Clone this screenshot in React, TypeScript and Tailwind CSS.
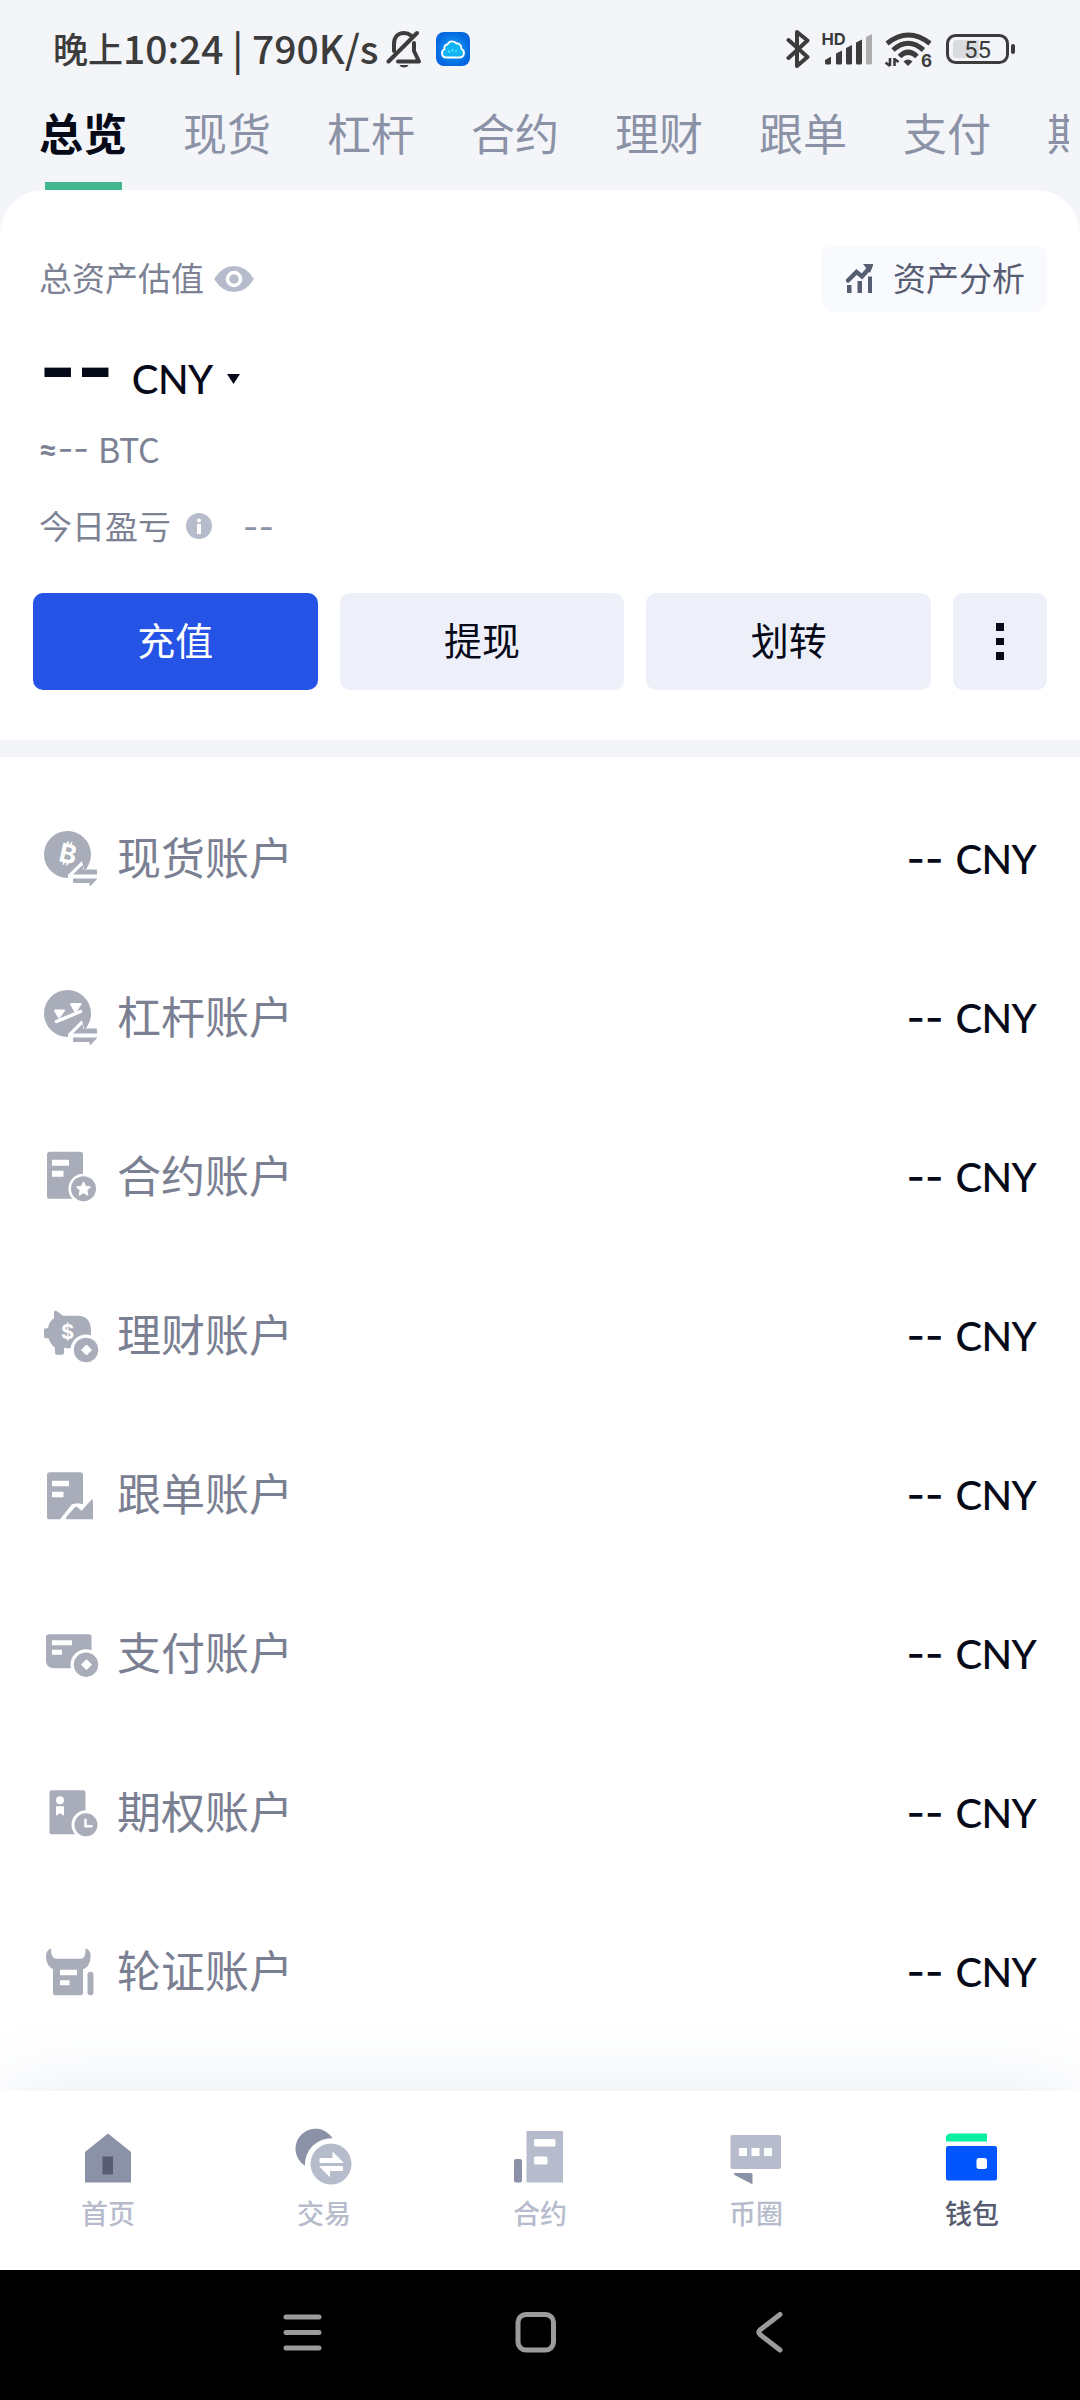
import React from 'react';

interface IconProps {
  className?: string;
}

const tabs = ['总览', '现货', '杠杆', '合约', '理财', '跟单', '支付', '期权'];

/* Status bar icons */
const BellOffIcon: React.FC<IconProps> = ({ className }) => (
  <svg className={className} width="36" height="38" viewBox="0 0 36 38" fill="none" stroke="#3c3c3c" strokeWidth="4" strokeLinecap="round">
    <path d="M8 21V14C8 7 12 3 18 3c3 0 5 .8 7 2.500" />
    <path d="M2.500 31.500L31 3" />
    <path d="M28 13v8l5 10.500H12" strokeLinejoin="round" />
    <path d="M13.500 35h9c-1 1.800-2.500 2.500-4.500 2.500s-3.500-.7-4.500-2.500z" fill="#3c3c3c" stroke="none" />
  </svg>
);

const CloudAppIcon: React.FC<IconProps> = ({ className }) => (
  <svg className={className} width="34" height="34" viewBox="0 0 34 34">
    <defs>
      <radialGradient id="cloudBg">
        <stop offset="0" stopColor="#10a8fa" />
        <stop offset="1" stopColor="#0668e0" />
      </radialGradient>
    </defs>
    <rect width="34" height="34" rx="8" fill="url(#cloudBg)" />
    <path d="M10 25.500h14a4.500 4.500 0 0 0 1.500-8.500c0-4-2.500-6-5-5.500-2-3-7.500-3-9 1-3 .2-3.500 2.500-3 4.500-4 2-3 8.500 1.500 8.500z" fill="#12b4f5" stroke="#fff" strokeWidth="1.800" />
    <path d="M13 18v3M16.500 17v3M20 18v2" stroke="#5ff0ff" strokeWidth="1.200" />
  </svg>
);

const BluetoothIcon: React.FC<IconProps> = ({ className }) => (
  <svg className={className} width="24" height="38" viewBox="0 0 24 38" fill="none" stroke="#3c3c3c" strokeWidth="4" strokeLinecap="round" strokeLinejoin="round">
    <path d="M2.500 10L21.500 27 11 36V2l10.500 8.500L2.500 28" />
  </svg>
);

const SignalIcon: React.FC<IconProps> = ({ className }) => (
  <svg className={className} width="52" height="40" viewBox="0 -3 52 40" fill="#3c3c3c">
    <text x="-.5" y="13" fontSize="16.500" fontWeight="700" fontFamily="Inter, sans-serif">HD</text>
    <path d="M3 28l6-3.500V31q0 1.500-1.500 1.500H4.500Q3 32.500 3 31zM14 21.500l6-3V31q0 1.500-1.500 1.500h-3Q14 32.500 14 31zM24 16l6-3V31q0 1.500-1.500 1.500h-3Q24 32.500 24 31zM34 10.500l6-3V31q0 1.500-1.500 1.500h-3Q34 32.500 34 31z" />
    <path d="M44 5l6-3V31q0 1.500-1.500 1.500h-3Q44 32.500 44 31z" fill="#adadae" />
  </svg>
);

const WifiIcon: React.FC<IconProps> = ({ className }) => (
  <svg className={className} width="50" height="46" viewBox="0 -4 50 46" fill="none" stroke="#3c3c3c" strokeWidth="5">
    <path d="M2 13.500Q23.500 -3.500 45 13.500M8 20Q23 6.500 38.500 20M14.500 26.500Q23 18 32 26.500" />
    <path d="M18.500 31.500q4.500-4 9 0l-4.500 4.500z" fill="#3c3c3c" stroke="none" />
    <path d="M5 28v8M.5 32.500L5 36M9.500 36v-8M9.500 29l4 3" strokeWidth="2.600" />
    <text x="36" y="36.500" fontSize="17" fontWeight="700" fontFamily="Inter, sans-serif" fill="#3c3c3c" stroke="none">6</text>
  </svg>
);

const BatteryIcon: React.FC<IconProps> = ({ className }) => (
  <svg className={className} width="70" height="30" viewBox="0 0 70 30">
    <rect x="1.500" y="1.500" width="60" height="27" rx="8" fill="none" stroke="#3c3c3c" strokeWidth="3" />
    <path d="M11 6h22v18H11q-4 0-4-4V10q0-4 4-4z" fill="#dadbde" />
    <rect x="65" y="10" width="4" height="10" rx="2" fill="#3c3c3c" />
    <text x="31.500" y="23.500" textAnchor="middle" fontSize="24" fontFamily="Roboto, sans-serif" fill="#3c3c3c">55</text>
  </svg>
);

/* Account icons, all on a 56x56 grid */
const Swap = () => (
  <g>
    <path d="M38 30L24 44v12h20z" fill="#fff" />
    <path d="M29 43.500l8.500-8.500q1.500-1 1.500 .5V38.500h13q1 0 1 1v4zM29 47.500h24.500l-6.500 7q-1.500 1-1.500-.5V52H30q-1 0-1-1z" />
  </g>
);

const SpotIcon = () => (
  <>
    <circle cx="23.500" cy="23.500" r="23.500" />
    <text x="24" y="32" fontSize="26" fontWeight="700" textAnchor="middle" fontFamily="Inter, DejaVu Sans, sans-serif" fill="#fff" transform="rotate(12 24 23)">₿</text>
    <Swap />
  </>
);

const MarginIcon = () => (
  <>
    <circle cx="23.500" cy="23.500" r="23.500" />
    <g fill="#fff" stroke="#fff" strokeWidth="2" strokeLinejoin="round">
      <path d="M12.500 31.500l24-10" strokeWidth="3.500" strokeLinecap="round" />
      <path d="M11 20.500h9l-5 7zM27 14h9.500l-5 8z" />
    </g>
    <Swap />
  </>
);

const ContractIcon = () => (
  <g transform="translate(0 1.700)">
    <path d="M6 1h30q3 0 3 3v42q0 2-2 2H5q-2 0-2-2V4q0-3 3-3z" />
    <path d="M8 9h17v6H8zM8 20h11.500v6H8z" fill="#fff" />
    <circle cx="39.500" cy="38" r="15" fill="#fff" />
    <circle cx="39.500" cy="38" r="12.500" />
    <path d="M39.500 31l2.100 4.600 5 .6-3.700 3.400 1 5-4.400-2.500-4.400 2.500 1-5-3.700-3.400 5-.6z" fill="#fff" stroke="#fff" strokeWidth="1" strokeLinejoin="round" />
  </g>
);

const Coin: React.FC<{ cy: number }> = ({ cy }) => (
  <g transform={`translate(42 ${cy})`}>
    <circle r="15.500" fill="#fff" />
    <circle r="12.200" />
    <path d="M.5 -5L5.500 0 .5 5 -4.500 0z" fill="#fff" stroke="#fff" strokeLinejoin="round" />
  </g>
);

const EarnIcon = () => (
  <g transform="translate(0 2.800)">
    <path d="M10 2q0-3 3-1.500L19 5h15q12 0 13 14v16H32v2q-4 1-12 0v5q0 2-2 2h-5q-2 0-2-2v-5q-5-4-6.500-9.500H2q-2 0-2-2v-6q0-2 2-2h2q1-7 6-10z" />
    <text x="23.500" y="28" fontSize="20" fontWeight="700" textAnchor="middle" fontFamily="Inter, sans-serif" fill="#fff">$</text>
    <Coin cy={39.200} />
  </g>
);

const CopyIcon = () => (
  <g transform="translate(0 4.200)">
    <path d="M6 1h30q3 0 3 3v29l-5-1-6 1-12 15H5q-2 0-2-2V4q0-3 3-3z" />
    <path d="M8 9.500h17V15H8zM8 20.500h11.500V26H8z" fill="#fff" />
    <path d="M22.500 45.500l8-9q1.500-1.500 3-.5l4 3.500 9.500-10.500q1.500-1.500 2 .5V48H23q-2-1-.5-2.500z" />
  </g>
);

const PayIcon = () => (
  <g transform="translate(0 4.200)">
    <path d="M5 4h40q2.500 0 2.500 2.500V38H10q-8 0-8-8V7q0-3 3-3z" />
    <path d="M8 10h20v5H8zM8 19.500h10v5H8z" fill="#fff" />
    <Coin cy={34.500} />
  </g>
);

const OptionIcon = () => (
  <g transform="translate(0 3.300)">
    <path d="M8 2h31q2.500 0 2.500 2.500V46H7.500Q5.500 46 5.500 44V4.500Q5.500 2 8 2z" />
    <path d="M12 18h8v9.500l-4-2.500-4 2.500z" fill="#fff" />
    <circle cx="16" cy="12" r="4" fill="#fff" />
    <circle cx="42" cy="36.500" r="14.500" fill="#fff" />
    <circle cx="42" cy="36.500" r="11.500" />
    <path d="M41.500 30.500v7.500h7" fill="none" stroke="#fff" strokeWidth="2.500" />
  </g>
);

const WarrantIcon = () => (
  <g transform="translate(0 4.200)">
    <path d="M7 0q0 10.500 5 10.500h25Q42 10.500 41.500 0q6 2 5 10-1 9-7.500 11v24q0 2-2 2H11q-2 0-2-2V21Q3 18 2 10 1.500 2 7 0z" />
    <path d="M16 21.500h17V27H16zM16 32h9.500v5H16z" fill="#fff" />
    <rect x="43.500" y="23.500" width="6" height="23.500" rx="3" />
  </g>
);

const accounts = [
  { name: '现货账户', icon: <SpotIcon /> },
  { name: '杠杆账户', icon: <MarginIcon /> },
  { name: '合约账户', icon: <ContractIcon /> },
  { name: '理财账户', icon: <EarnIcon /> },
  { name: '跟单账户', icon: <CopyIcon /> },
  { name: '支付账户', icon: <PayIcon /> },
  { name: '期权账户', icon: <OptionIcon /> },
  { name: '轮证账户', icon: <WarrantIcon /> },
];

/* Bottom navigation icons, 60x60 grid */
const navItems = [
  {
    label: '首页',
    icon: (
      <>
        <path d="M30 7.500L53 26v30.500H7V26z" fill="#8b91a6" />
        <path d="M24.500 30.500H35v18H24.500z" fill="#575c70" />
      </>
    ),
  },
  {
    label: '交易',
    icon: (
      <>
        <path d="M11 39.700A20 20 0 1 1 38.600 12.300 26 26 0 0 0 11 39.700z" fill="#8b91a6" />
        <circle cx="37" cy="38" r="20.500" fill="#b6bccc" />
        <path d="M26 32.500h13v-6l10 10H26zM48.500 40.500v4H35.500v6L26 40.500z" fill="#fff" stroke="#fff" strokeLinejoin="round" />
      </>
    ),
  },
  {
    label: '合约',
    icon: (
      <>
        <rect x="4" y="33" width="8" height="23.500" rx="2" fill="#8b91a6" />
        <path d="M16.500 5H53v51.500H16.500z" fill="#b6bccc" />
        <rect x="24" y="13" width="21.500" height="7.500" rx="1.500" fill="#fff" />
        <rect x="24" y="30.500" width="13.500" height="8" rx="1.500" fill="#fff" />
      </>
    ),
  },
  {
    label: '币圈',
    icon: (
      <>
        <rect x="4.500" y="9" width="50.500" height="34" rx="2" fill="#b6bccc" />
        <path d="M13 22h8v8h-8zM25.500 22h8v8h-8zM38 22h8v8h-8z" fill="#fff" />
        <path d="M9 47h15.500q2 0 2 2v8q0 1.500-1.500 .5L8.500 49q-1.500-1.500.5-2z" fill="#8b91a6" />
      </>
    ),
  },
  {
    label: '钱包',
    active: true,
    icon: (
      <>
        <path d="M7 7.500h37.500q.5 0 .5 .5v7.500H4V10z" fill="#06f0a0" />
        <rect x="4" y="20" width="51" height="34.500" rx="2" fill="#0156fd" />
        <rect x="34.500" y="32" width="10.500" height="11" rx="2.500" fill="#fff" />
      </>
    ),
  },
];

const StatusBar = () => (
  <div className="flex h-[98px] items-center justify-between pl-[53px] pr-[64px] text-[#3c3c3c]">
    <div className="flex items-center">
      <span className="pb-1 text-[35px] font-medium leading-none">晚上</span>
      <span className="whitespace-pre pb-1 text-[39px] font-medium leading-none">10:24 | 790K/s</span>
      <BellOffIcon className="ml-[7px]" />
      <CloudAppIcon className="ml-[14px]" />
    </div>
    <div className="flex items-center">
      <BluetoothIcon />
      <SignalIcon className="ml-3" />
      <WifiIcon className="ml-[11px]" />
      <BatteryIcon className="ml-[11px]" />
    </div>
  </div>
);

const Tabs = () => (
  <div className="mr-[11px] flex h-[92px] gap-14 overflow-hidden pl-[39px]">
    {tabs.map((tab, i) => (
      <div key={tab} className="flex w-[88px] shrink-0 flex-col items-center justify-between">
        <span className={`mt-[2px] whitespace-nowrap text-[44px] leading-[64px] ${i === 0 ? 'font-bold text-[#050918]' : 'text-[#8b92a6]'}`}>
          {tab}
        </span>
        {i === 0 && <div className="h-2 w-[77px] bg-[#42b88f]" />}
      </div>
    ))}
  </div>
);

const Summary = () => (
  <section className="h-[550px] rounded-t-[44px] bg-white px-[33px] pt-[55px]">
    <div className="flex h-[67px] items-center justify-between pl-[6px]">
      <div className="flex items-center text-[33px] text-[#7c8294]">
        <span className="pb-[2px]">总资产估值</span>
        <svg className="ml-[10px]" width="40" height="26" viewBox="0 0 40 26">
          <path d="M0 13Q8 0 20 0t20 13q-8 13-20 13T0 13z" fill="#b6bccc" />
          <circle cx="20" cy="13" r="6.500" fill="none" stroke="#fff" strokeWidth="3.500" />
        </svg>
      </div>
      <button className="flex h-full w-[226px] items-center rounded-xl bg-[#f9fafe] pl-[25px] text-[33px] text-[#575d72]">
        <svg className="mr-5" width="27" height="29" viewBox="0 0 27 29" fill="#575d72">
          <path d="M1 21h4.500v8H1zM11.500 17H16v12h-4.500zM22 12.500h4V29h-4z" />
          <path d="M2 16.500l8.500-8.500 5.500 4.500 7-8" fill="none" stroke="#575d72" strokeWidth="4.500" strokeLinecap="round" />
          <path d="M17 0h10v1.500L24 9z" />
        </svg>
        <span className="pb-[2px]">资产分析</span>
      </button>
    </div>

    <div className="mt-[32px] flex h-[70px] items-center pl-[6px]">
      <span className="pb-[24px] font-['Inter',sans-serif] text-[80px] font-bold leading-[70px] text-[#050918]">--</span>
      <span className="ml-[18px] pb-px font-['Lato',sans-serif] text-[40px] font-medium leading-none tracking-[-0.5px] text-[#050918]">CNY</span>
      <svg className="ml-[14px]" width="13" height="10" viewBox="0 0 13 10">
        <path d="M0 0h13L6.500 10z" fill="#050918" />
      </svg>
    </div>

    <div className="mt-[4px] flex h-[60px] items-center pl-[5px] text-[34px] text-[#7c8294]">
      <span className="font-['Lato',sans-serif] text-[34px] font-bold">≈</span>
      <span className="font-['Inter',sans-serif]">--</span>
      <span className="ml-[9px] tracking-[-0.5px]">BTC</span>
    </div>

    <div className="mt-[18px] flex h-[60px] items-center pl-[6px] text-[33px] text-[#7c8294]">
      <span className="pb-px">今日盈亏</span>
      <svg className="ml-[15px]" width="26" height="26" viewBox="0 0 26 26">
        <circle cx="13" cy="13" r="13" fill="#b6bccc" />
        <circle cx="13" cy="7.500" r="2" fill="#fff" />
        <rect x="11" y="11" width="4" height="10" fill="#fff" />
      </svg>
      <span className="ml-[31px] pt-[3px] font-['Inter',sans-serif] tracking-[0.5px] text-[#8b92a6]">--</span>
    </div>

    <div className="mt-[37px] flex h-[97px] gap-[22px] text-[38px]">
      <button className="flex-1 rounded-[10px] bg-[#2453e5] pb-[6px] text-white">充值</button>
      <button className="flex-1 rounded-[10px] bg-[#eef0f9] pb-[6px] text-[#050918]">提现</button>
      <button className="flex-1 rounded-[10px] bg-[#eef0f9] pb-[6px] text-[#050918]">划转</button>
      <button className="flex w-[94px] flex-col items-center justify-center gap-[7px] rounded-[10px] bg-[#eef0f9]">
        <span className="size-[7.500px] bg-[#050918]" />
        <span className="size-[7.500px] bg-[#050918]" />
        <span className="size-[7.500px] bg-[#050918]" />
      </button>
    </div>
  </section>
);

const AccountList = () => (
  <section className="mt-[17px] h-[1334px] bg-white pt-[22px]">
    {accounts.map(({ name, icon }) => (
      <div key={name} className="flex h-[159px] items-center justify-between pl-[44px] pr-[44px]">
        <div className="flex items-center">
          <svg width="56" height="56" viewBox="0 0 56 56" fill="#a8adb9">{icon}</svg>
          <span className="ml-[17px] pb-[5px] text-[44px] leading-none text-[#7a8092]">{name}</span>
        </div>
        <div className="flex items-center pt-px text-[40px] font-medium leading-none text-[#050918]">
          <span className="font-['Inter',sans-serif]">--</span>
          <span className="ml-[12px] font-['Lato',sans-serif] tracking-[-0.7px]">CNY</span>
        </div>
      </div>
    ))}
  </section>
);

const BottomNav = () => (
  <nav className="relative grid h-[179px] grid-cols-5 bg-white pt-[35px] shadow-[0_-10px_80px_-10px_rgba(60,90,160,0.12)]">
    {navItems.map(({ label, icon, active }) => (
      <div key={label} className="flex flex-col items-center">
        <svg width="60" height="60" viewBox="0 0 60 60">{icon}</svg>
        <span className={`mt-[10px] text-[27px] font-medium leading-[34px] ${active ? 'text-[#575c70]' : 'text-[#b6bccc]'}`}>{label}</span>
      </div>
    ))}
  </nav>
);

const SystemBar = () => (
  <div className="relative flex h-[130px] items-center justify-center gap-[193px] bg-black pb-[7px] pr-[8px]">
    <svg width="40" height="42" viewBox="0 0 40 42" stroke="#9b9b9b" strokeWidth="5" strokeLinecap="round">
      <path d="M4 6h33M4 21.500h33M4 37h33" />
    </svg>
    <svg width="42" height="42" viewBox="0 0 42 42" fill="none" stroke="#9b9b9b" strokeWidth="5">
      <rect x="3" y="3.500" width="35.500" height="35.500" rx="8" />
    </svg>
    <svg width="40" height="42" viewBox="0 0 40 42" fill="none" stroke="#9b9b9b" strokeWidth="5" strokeLinecap="round" strokeLinejoin="round">
      <path d="M30 3.500L10 19q-2.500 2 0 4.500L30 39" />
    </svg>
  </div>
);

export default function App() {
  return (
    <div className="h-[2400px] w-[1080px] overflow-hidden bg-[#f3f5f9] font-['Noto_Sans_CJK_SC',sans-serif]">
      <StatusBar />
      <Tabs />
      <Summary />
      <AccountList />
      <BottomNav />
      <SystemBar />
    </div>
  );
}
